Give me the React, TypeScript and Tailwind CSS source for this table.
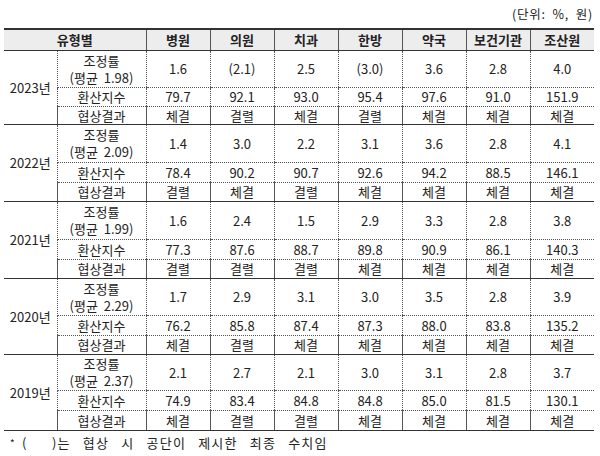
import { Fragment } from 'react';

const cols = ['병원', '의원', '치과', '한방', '약국', '보건기관', '조산원'];

type Block = {
  year: string;
  avg: string;
  rate: string[];
  index: string[];
  result: string[];
  h: [string, string, string];
};

const blocks: Block[] = [
  {
    year: '2023년',
    avg: '1.98',
    rate: ['1.6', '(2.1)', '2.5', '(3.0)', '3.6', '2.8', '4.0'],
    index: ['79.7', '92.1', '93.0', '95.4', '97.6', '91.0', '151.9'],
    result: ['체결', '결렬', '체결', '결렬', '체결', '체결', '체결'],
    h: ['h-[37px]', 'h-[19px]', 'h-[18px]'],
  },
  {
    year: '2022년',
    avg: '2.09',
    rate: ['1.4', '3.0', '2.2', '3.1', '3.6', '2.8', '4.1'],
    index: ['78.4', '90.2', '90.7', '92.6', '94.2', '88.5', '146.1'],
    result: ['결렬', '체결', '결렬', '체결', '체결', '체결', '체결'],
    h: ['h-[38px]', 'h-[20px]', 'h-[19px]'],
  },
  {
    year: '2021년',
    avg: '1.99',
    rate: ['1.6', '2.4', '1.5', '2.9', '3.3', '2.8', '3.8'],
    index: ['77.3', '87.6', '88.7', '89.8', '90.9', '86.1', '140.3'],
    result: ['결렬', '결렬', '결렬', '체결', '체결', '체결', '체결'],
    h: ['h-[38px]', 'h-[20px]', 'h-[19px]'],
  },
  {
    year: '2020년',
    avg: '2.29',
    rate: ['1.7', '2.9', '3.1', '3.0', '3.5', '2.8', '3.9'],
    index: ['76.2', '85.8', '87.4', '87.3', '88.0', '83.8', '135.2'],
    result: ['체결', '결렬', '체결', '체결', '체결', '체결', '체결'],
    h: ['h-[37px]', 'h-[20px]', 'h-[19px]'],
  },
  {
    year: '2019년',
    avg: '2.37',
    rate: ['2.1', '2.7', '2.1', '3.0', '3.1', '2.8', '3.7'],
    index: ['74.9', '83.4', '84.8', '84.8', '85.0', '81.5', '130.1'],
    result: ['체결', '결렬', '결렬', '체결', '체결', '체결', '체결'],
    h: ['h-[36px]', 'h-[20px]', 'h-[20px]'],
  },
];

const font = { fontFamily: '"Noto Sans CJK KR", "Noto Sans", sans-serif' };

const dotted = 'border-l border-l-[#555] border-b border-dotted border-b-[#555] p-0';
const solid = 'border-l border-l-[#555] border-b border-solid border-b-[#333] p-0';

const App = () => {
  return (
    <div className="w-[600px] h-[456px] bg-white text-[#222] overflow-hidden" style={font}>
      <div className="h-[28px] flex items-center justify-end pr-[7px] text-[12.5px] leading-none tracking-[0.8px] [word-spacing:3px]">
        (단위: %, 원)
      </div>

      <table className="ml-[4px] w-[590px] table-fixed border-collapse text-[13px] leading-[17px] text-center">
        <colgroup>
          <col className="w-[53px]" />
          <col className="w-[89px]" />
          {cols.map((c) => (
            <col key={c} className="w-[64px]" />
          ))}
        </colgroup>
        <thead>
          <tr className="h-[21px] bg-[#ededed]">
            <th colSpan={2} className="border-t-2 border-b border-t-[#333] border-b-[#333] font-bold p-0">
              유형별
            </th>
            {cols.map((c) => (
              <th key={c} className="border-t-2 border-b border-l border-t-[#333] border-b-[#333] border-l-[#555] font-bold p-0">
                {c}
              </th>
            ))}
          </tr>
        </thead>
        <tbody>
          {blocks.map((b) => (
            <Fragment key={b.year}>
              <tr className={b.h[0]}>
                <td rowSpan={3} className="border-b border-b-[#333] p-0">
                  {b.year}
                </td>
                <td className={dotted}>
                  조정률
                  <br />
                  <span className="[word-spacing:3px]">(평균 {b.avg})</span>
                </td>
                {b.rate.map((v, i) => (
                  <td key={i} className={dotted}>
                    {v}
                  </td>
                ))}
              </tr>
              <tr className={b.h[1]}>
                <td className={dotted}>환산지수</td>
                {b.index.map((v, i) => (
                  <td key={i} className={dotted}>
                    {v}
                  </td>
                ))}
              </tr>
              <tr className={b.h[2]}>
                <td className={solid}>협상결과</td>
                {b.result.map((v, i) => (
                  <td key={i} className={solid}>
                    {v}
                  </td>
                ))}
              </tr>
            </Fragment>
          ))}
        </tbody>
      </table>

      <div className="mt-[3px] pl-[10px] flex items-center text-[13px] leading-[17px]">
        <span className="text-[10px] leading-none w-[12px] pt-[2px]">*</span>
        <span className="w-[30px]">(</span>
        <span className="tracking-[1.2px] [word-spacing:8px]">)는 협상 시 공단이 제시한 최종 수치임</span>
      </div>
    </div>
  );
};

export default App;
